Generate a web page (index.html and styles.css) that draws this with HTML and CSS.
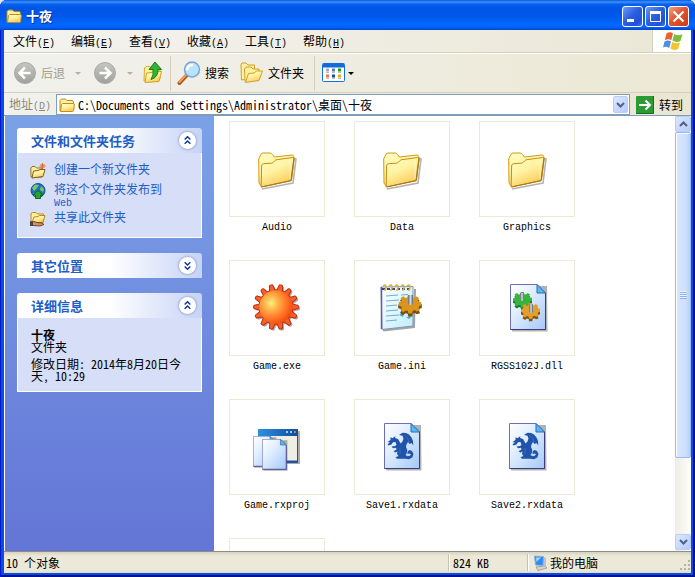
FILE: index.html
```html
<!DOCTYPE html>
<html lang="zh-CN">
<head>
<meta charset="utf-8">
<meta name="viewport" content="width=device-width, initial-scale=1">
<title>十夜</title>
<link rel="stylesheet" href="styles.css">
</head>
<body>
<svg class="defs" width="0" height="0" aria-hidden="true">
  <defs>
    <linearGradient id="gFolder" x1="0" y1="0" x2=".5" y2="1"><stop offset="0" stop-color="#fffcc8"/><stop offset=".5" stop-color="#fff3a2"/><stop offset="1" stop-color="#fbcb5c"/></linearGradient>
    <linearGradient id="gPage" x1="0" y1="0" x2="1" y2="1"><stop offset="0" stop-color="#fff"/><stop offset=".35" stop-color="#e4f0ff"/><stop offset="1" stop-color="#a4c8fa"/></linearGradient>
    <radialGradient id="gSun" gradientUnits="userSpaceOnUse" cx="18" cy="19" r="23"><stop offset="0" stop-color="#fff07a"/><stop offset=".35" stop-color="#ffac45"/><stop offset=".75" stop-color="#ff6a20"/><stop offset="1" stop-color="#f2480f"/></radialGradient>
    <linearGradient id="gGray" x1="0" y1="0" x2="0" y2="1"><stop offset="0" stop-color="#c6c6c2"/><stop offset="1" stop-color="#9f9f9b"/></linearGradient>
    <linearGradient id="gPad" x1="0" y1="0" x2="1" y2="1"><stop offset="0" stop-color="#fff"/><stop offset="1" stop-color="#bdeef8"/></linearGradient>
    <linearGradient id="gBar" x1="0" y1="0" x2="1" y2="0"><stop offset="0" stop-color="#2f90e0"/><stop offset="1" stop-color="#0a4ea0"/></linearGradient>
    <linearGradient id="gPin" x1="0" y1="0" x2="1" y2="0"><stop offset="0" stop-color="#5c6670"/><stop offset=".5" stop-color="#d5dbe0"/><stop offset="1" stop-color="#59616a"/></linearGradient>
  </defs>
  <symbol id="folder-lg" viewBox="0 0 48 48">
    <g transform="translate(5 7)">
      <path d="M4 37 35 31 38 7 36 6" fill="none" stroke="#777" stroke-width="1.6" opacity=".55"/>
      <path d="M3 34 1 31 .7 7 2.6 3Q3.2 1 5 1H12Q13.700 1 14.600 2.500L16.400 5 34 3Q35.500 3 35.700 4.500L33 28Z" fill="url(#gFolder)" stroke="#cf9c17"/>
      <path d="M3.200 35 3.600 14Q3.600 12 5.500 11.700L13.500 11.200Q15 11 16.500 9L18 7.800 34.700 5.500Q36.400 5.300 36.200 7L33.700 27Q33.500 28.700 32 29Z" fill="url(#gFolder)" stroke="#c39012"/>
      <path d="M3.500 35 33 28.600 36 6" fill="none" stroke="#a77710" stroke-width="1.200"/>
      <path d="M32 7.500V27" stroke="#fffbe0" opacity=".7"/>
    </g>
  </symbol>
  <symbol id="folder-sm" viewBox="0 0 16 16">
    <path d="M1 14V3.500L2.500 2H6.500L8 3.500H13.500L14.500 5V7" fill="#fff0a0" stroke="#b98a20"/>
    <path d="M1.500 14.500 2.500 7.500 3.500 6.500H14.500Q15.500 6.500 15.300 8L14.700 13.500Q14.500 14.500 13.500 14.500Z" fill="url(#gFolder)" stroke="#c08d1e"/>
  </symbol>
  <symbol id="page" viewBox="0 0 38 48" preserveAspectRatio="none">
    <path d="M2 2H37L37.500 47.500H2Z" fill="#555" opacity=".45"/>
    <path d="M.5.5H27L35.500 9V45.500H.5Z" fill="url(#gPage)" stroke="#6b6fb8"/>
    <path d="M.5 45.500H35.500V9" fill="none" stroke="#3e3c7c"/>
    <path d="M27 .5V9H35.500Z" fill="#59b8f2" stroke="#2b6cb4"/>
  </symbol>
  <symbol id="cog" viewBox="0 0 26 22">
    <path d="M10 3 10.500 0 15 0 15.500 3 18 3.500 20 1.500 23.500 3.500 22 6 23 7.500 26 8 26 12 23.500 13 23 15 24 18 20.500 19 18.500 17.500 16 18.500 15.500 21.500 11 21.500 10.500 18.500 8 18 5.500 20 2 17.500 3.500 15 2.500 13 0 12.500 0 8.500 2.700 7.500 3.500 6 2 3.500 5.500 1.500 7.500 3.500Z"/>
  </symbol>
  <symbol id="dragon" viewBox="0 0 48 48">
    <use href="#page" x="6" y="0" width="38" height="48"/>
    <path d="M21 12 24.500 9.700 28 10 31 11.500 33.500 14.500 35 18 35.300 22.500 33.500 20 31.500 21 30 19 28.500 21.500 28 24 29.300 27 28.800 30 27.500 32 29.500 33.300 32 32.800 33 31 31 30.500 29.500 31.200 29.600 28.500 31.500 27 34 28 35.500 31 34.300 34.500 31 36.200 27.500 35.800 19 35.700 17.500 34.300 20.500 33 19 31 19.500 28.500 17.500 29.500 15.500 28.300 18.500 26.500 18 24.800 15 25.300 13.500 23.500 17 23 18.500 22 17.500 19 15 19.300 13.500 21.500 10.500 22.500 9.500 21.300 12 19.500 9.500 19 12.500 17 12.500 14.300 14.500 15.200 17.500 13 17 15 20 16 21.500 18.500 22.500 20.500 24.500 18.500 25.500 15.500 24.500 12.800Z" fill="#2153aa"/>
    <path d="M26 12 29.500 15 31 19M22 25V31" stroke="#5684d0" stroke-width=".5" fill="none"/>
  </symbol>
</svg>

<main class="window">
  <header class="titlebar">
    <svg class="ic16" aria-hidden="true"><use href="#folder-sm"/></svg>
    <h1>十夜</h1>
    <button class="cap" aria-label="最小化"><svg viewBox="0 0 19 19"><path d="M4 13.500H11" stroke="#fff" stroke-width="3"/></svg></button>
    <button class="cap" aria-label="最大化"><svg viewBox="0 0 19 19"><path d="M4.500 4V14.500H14.500V4" stroke="#fff" fill="none"/><path d="M4 5.500H15" stroke="#fff" stroke-width="3"/></svg></button>
    <button class="cap close" aria-label="关闭"><svg viewBox="0 0 19 19"><path d="M4.500 4.500 14.500 14.500M14.500 4.500 4.500 14.500" stroke="#fff" stroke-width="2.200"/></svg></button>
  </header>

  <div class="menurow">
    <nav class="menu">
      <button>文件<span class="key">(<u>F</u>)</span></button>
      <button>编辑<span class="key">(<u>E</u>)</span></button>
      <button>查看<span class="key">(<u>V</u>)</span></button>
      <button>收藏<span class="key">(<u>A</u>)</span></button>
      <button>工具<span class="key">(<u>T</u>)</span></button>
      <button>帮助<span class="key">(<u>H</u>)</span></button>
    </nav>
    <div class="brand">
      <svg width="20" height="20" viewBox="0 0 20 20" aria-hidden="true">
        <path d="M3.500 2.500Q7 0 10 2.500L8.300 9Q5 7.500 1.800 9.200Z" fill="#ec6130"/>
        <path d="M11.200 3Q15 5.500 19.500 3L17.500 10Q13.500 12 9.500 9.600Z" fill="#7cbd3c"/>
        <path d="M1.500 10.500Q5 8.500 8 10.400L6.200 17Q3 15 0 16.500Z" fill="#4a8fe0"/>
        <path d="M9.200 11Q13 13.300 17 11.500L15 18Q11.500 20 7.300 17.500Z" fill="#f8c42c"/>
      </svg>
    </div>
  </div>

  <div class="toolbar">
    <button class="tool back" disabled>
      <svg width="24" height="24" viewBox="0 0 24 24" aria-hidden="true"><circle cx="12" cy="12" r="10.500" fill="url(#gGray)" stroke="#a9a9a5"/><path d="M17.500 12H8M12 6.500 6.500 12 12 17.500" fill="none" stroke="#fff" stroke-width="2.500"/></svg>
      <span>后退</span><i class="tri"></i>
    </button>
    <button class="tool forward" disabled aria-label="前进">
      <svg width="24" height="24" viewBox="0 0 24 24" aria-hidden="true"><circle cx="12" cy="12" r="10.500" fill="url(#gGray)" stroke="#a9a9a5"/><path d="M6.500 12H16M12 6.500 17.500 12 12 17.500" fill="none" stroke="#fff" stroke-width="2.500"/></svg>
      <i class="tri"></i>
    </button>
    <button class="tool up" aria-label="向上">
      <svg width="20" height="24" viewBox="0 0 20 24" aria-hidden="true">
        <path d="M1 20 1.500 7 3 5.500H7L8.500 7.500 17 7V18Z" fill="#fff0a0" stroke="#d8ab32"/>
        <path d="M2 21.500 3.500 12 9 11.500 11 10 18.500 10.500 16 20.500Z" fill="url(#gFolder)" stroke="#d0a02c"/>
        <path d="M12 1 18.500 8.500H15Q15.500 16 8 18.500 11 14 10 8.500H6Z" fill="#35b335" stroke="#168016"/>
      </svg>
    </button>
    <span class="sep"></span>
    <button class="tool search">
      <svg width="24" height="24" viewBox="0 0 24 24" aria-hidden="true"><path d="M2.500 22 10 14" stroke="#a75724" stroke-width="4" stroke-linecap="round"/><path d="M2.500 21 9.500 13.500" stroke="#f09a52" stroke-width="2" stroke-linecap="round"/><circle cx="15" cy="8.500" r="7.500" fill="#b9e2fb" stroke="#7aa4d4" stroke-width="1.500"/><path d="M10 9Q11 3.500 16 4" stroke="#fff" stroke-width="2.500" fill="none"/></svg>
      <span>搜索</span>
    </button>
    <button class="tool folders">
      <svg width="24" height="22" viewBox="0 0 24 22" aria-hidden="true">
        <path d="M1.500 18 1 3 2 1H6L8 3H14.500V16Z" fill="#fff0a0" stroke="#d0a02c"/>
        <path d="M5 19.500 4.500 7 6 5H11L13 7H19V18Z" fill="#fff0a0" stroke="#d0a02c"/>
        <path d="M5.500 20.500 8.500 11.500 14 11 16.500 9 22.500 9 19 18.500Z" fill="url(#gFolder)" stroke="#d0a02c"/>
      </svg>
      <span>文件夹</span>
    </button>
    <span class="sep"></span>
    <button class="tool views" aria-label="查看方式">
      <svg width="24" height="20" viewBox="0 0 24 20" aria-hidden="true"><rect x=".5" y=".5" width="22" height="18" rx="1" fill="#fff" stroke="#1670dc"/><path d="M1 2.500H22" stroke="#1269d8" stroke-width="4"/>
        <g><path d="M4 5.500h3v3h-3z" fill="#a8a4c8"/><path d="M10 5.500h3v3h-3z" fill="#527cc8"/><path d="M16 5.500h3v3h-3z" fill="#159a22"/><path d="M4 11.500h3v3h-3z" fill="#f07440"/><path d="M10 11.500h3v3h-3z" fill="#1746a0"/><path d="M16 11.500h3v3h-3z" fill="#e8a51e"/><path d="M4 9.500H7M10 9.500H13M16 9.500H19M4 15.500H7M10 15.500H13M16 15.500H19" stroke="#bbb"/></g></svg>
      <i class="tri dark"></i>
    </button>
  </div>

  <form class="addressbar">
    <label for="address">地址<span class="key">(<u>D</u>)</span></label>
    <div class="combo">
      <svg class="ic16" aria-hidden="true"><use href="#folder-sm"/></svg>
      <input id="address" type="text" value="C:\Documents and Settings\Administrator\桌面\十夜">
      <button type="button" class="xpbtn" aria-label="展开地址列表"><svg width="9" height="6" viewBox="0 0 9 6"><path d="M1 1 4.500 4.500 8 1" fill="none" stroke="#4d6185" stroke-width="2"/></svg></button>
    </div>
    <button type="button" class="go"><svg width="18" height="18" viewBox="0 0 18 18" aria-hidden="true"><rect width="18" height="18" rx="1" fill="#2c9a34"/><path d="M0 17.500H17.500V0" fill="none" stroke="#14701c"/><path d="M3 9H14M9.500 4.500 14 9 9.500 13.500" fill="none" stroke="#fff" stroke-width="2"/></svg>转到</button>
  </form>

  <div class="content">
    <aside class="tasks">
      <section class="panel">
        <div class="head"><h2>文件和文件夹任务</h2><button class="round" aria-label="折叠"><svg viewBox="0 0 18 18"><path d="M6 8 9 5 12 8M6 12.500 9 9.500 12 12.500"/></svg></button></div>
        <ul class="links">
          <li><svg class="ic16" viewBox="0 0 16 16" aria-hidden="true"><path d="M1 14 .8 5 2 3.500H5L6.500 5H12V14Z" fill="#fff0a0" stroke="#8f7126"/><path d="M2 15 3.500 8 8 7.500 10 6.500H15L13 13.500Z" fill="url(#gFolder)" stroke="#7b5f20"/><path d="M12.500 0V6M9.500 3H15.500M10.500 1 14.500 5M14.500 1 10.500 5" stroke="#e66824"/></svg><a href="#">创建一个新文件夹</a></li>
          <li><svg class="ic16" viewBox="0 0 16 16" aria-hidden="true"><circle cx="8" cy="7.500" r="7" fill="#2670ba" stroke="#14539c"/><path d="M2 5 5 1.500 9 2 7 5 4 8ZM11 3 14 6 13 9 10 7ZM3 10 6 12 5 14Z" fill="#77c968"/><path d="M8 7.500 13 12H10.500V15.500H5.500V12H3Z" fill="#24a62c" stroke="#08691c"/></svg><a href="#">将这个文件夹发布到<br><span class="lat">Web</span></a></li>
          <li><svg class="ic16" viewBox="0 0 16 16" aria-hidden="true"><path d="M1 11V2.500L2.500 1.500H6L7.500 3H13.500V11Z" fill="#fff0a0" stroke="#b98a20"/><path d="M2 11.500 4 6 8 5.500 9.500 4.500H15L13 11.500Z" fill="url(#gFolder)" stroke="#b98a20"/><path d="M0 11 4 10.500 7 11.500 12 12 14 13.500 10 15 4 14.500 0 14.500Z" fill="#d88c56" stroke="#513425" stroke-width=".8"/><path d="M0 10.500H3V15H0Z" fill="#454545"/></svg><a href="#">共享此文件夹</a></li>
        </ul>
      </section>
      <section class="panel">
        <div class="head"><h2>其它位置</h2><button class="round" aria-label="展开"><svg viewBox="0 0 18 18"><path d="M6 5.500 9 8.500 12 5.500M6 10 9 13 12 10"/></svg></button></div>
      </section>
      <section class="panel">
        <div class="head"><h2>详细信息</h2><button class="round" aria-label="折叠"><svg viewBox="0 0 18 18"><path d="M6 8 9 5 12 8M6 12.500 9 9.500 12 12.500"/></svg></button></div>
        <div class="info"><b>十夜</b><p>文件夹</p><p class="date">修改日期: 2014年8月20日今天, 10:29</p></div>
      </section>
    </aside>

    <ul class="files">
      <li><div class="thumb"><svg><use href="#folder-lg"/></svg></div><span>Audio</span></li>
      <li><div class="thumb"><svg><use href="#folder-lg"/></svg></div><span>Data</span></li>
      <li><div class="thumb"><svg><use href="#folder-lg"/></svg></div><span>Graphics</span></li>
      <li><div class="thumb"><svg viewBox="0 0 48 48">
        <defs><path id="tooth" d="M-3.800-15.500Q-2.300-17-2-20.700-1.900-22.500-.8-22.500H.8Q1.900-22.500 2-20.700 2.300-17 3.800-15.500Z"/>
        <g id="ring"><use href="#tooth" transform="rotate(12.860)"/><use href="#tooth" transform="rotate(38.570)"/><use href="#tooth" transform="rotate(64.290)"/><use href="#tooth" transform="rotate(90)"/><use href="#tooth" transform="rotate(115.710)"/><use href="#tooth" transform="rotate(141.430)"/><use href="#tooth" transform="rotate(167.140)"/><use href="#tooth" transform="rotate(192.860)"/><use href="#tooth" transform="rotate(218.570)"/><use href="#tooth" transform="rotate(244.290)"/><use href="#tooth" transform="rotate(270)"/><use href="#tooth" transform="rotate(295.710)"/><use href="#tooth" transform="rotate(321.430)"/><use href="#tooth" transform="rotate(347.140)"/></g></defs>
        <g transform="translate(24.500 24.500)" fill="#555" opacity=".5"><use href="#ring"/><circle r="17"/></g>
        <g transform="translate(23 23)" fill="#f4602a" stroke="#bd2a0b"><circle r="17"/><use href="#ring"/></g>
        <circle cx="23" cy="23" r="16.700" fill="url(#gSun)"/>
      </svg></div><span>Game.exe</span></li>
      <li><div class="thumb"><svg viewBox="0 0 48 48">
        <path d="M5 46.500 36 43 37 5" fill="none" stroke="#666" stroke-width="2" opacity=".6"/>
        <path d="M3 3 35 2.500V42L4 45.500Z" fill="url(#gPad)" stroke="#7c91b8"/><path d="M3.500 3V45" stroke="#6557ae" stroke-width="1.500"/>
        <path d="M8 12 20 11M8 17 21 16M8 22 19 21M8 27 20 26M8 32 21 31M8 37 19 36M23 11 30 10.500" stroke="#71abd6"/>
        <path d="M4 5H33" stroke="#3e3f91" stroke-width="2" stroke-dasharray="3 2"/>
        <g fill="none" stroke="#d8b520" stroke-width="1.500"><path d="M5 2Q8-.5 8 3T6 6M11 2Q14-.5 14 3T12 6M17 2Q20-.5 20 3T18 6M23 2Q26-.5 26 3T24 6M29 2Q32-.5 32 3T30 6"/></g>
        <path d="M21 31 26 28 25 33ZM28 33 34 32 31 35Z" fill="#42a5ef"/>
        <use href="#cog" x="19" y="13" width="26" height="20" fill="#79500d"/><use href="#cog" x="19" y="11" width="26" height="19" fill="#d9951d"/>
        <path d="M30 11H35V20Q32.500 22 30 20Z" fill="url(#gPin)"/>
      </svg></div><span>Game.ini</span></li>
      <li><div class="thumb"><svg viewBox="0 0 48 48">
        <use href="#page" x="7" y="0" width="38" height="48"/>
        <use href="#cog" x="10" y="10" width="19" height="16" fill="#187528"/><use href="#cog" x="10" y="8" width="19" height="16" fill="#37b43a"/>
        <path d="M17 9H21V16Q19 18 17 16Z" fill="url(#gPin)"/>
        <use href="#cog" x="18" y="21" width="19" height="17" fill="#895008"/><use href="#cog" x="18" y="19" width="19" height="16" fill="#e0a02b"/>
        <path d="M26 20H30V28Q28 30 26 28Z" fill="url(#gPin)"/>
      </svg></div><span>RGSS102J.dll</span></li>
      <li><div class="thumb"><svg viewBox="0 0 48 48">
        <path d="M7 8H47V41H7Z" fill="#555" opacity=".5"/><rect x="5.500" y="6.500" width="39" height="33" fill="#efeee2" stroke="#1a57a5"/><rect x="5" y="6" width="40" height="7" fill="url(#gBar)"/><path d="M5 38.500H45" stroke="#2451a0" stroke-width="2"/><path d="M33 9H35M37 9H39" stroke="#98c8f5" stroke-width="2"/><path d="M41 9H43" stroke="#f0623a" stroke-width="2"/>
        <use href="#page" x="0" y="13" width="24" height="32"/><use href="#page" x="9" y="16" width="26" height="32"/>
      </svg></div><span>Game.rxproj</span></li>
      <li><div class="thumb"><svg><use href="#dragon"/></svg></div><span>Save1.rxdata</span></li>
      <li><div class="thumb"><svg><use href="#dragon"/></svg></div><span>Save2.rxdata</span></li>
      <li><div class="thumb"></div></li>
    </ul>

    <div class="scroll">
      <button class="xpbtn" aria-label="向上滚动"><svg width="9" height="6" viewBox="0 0 9 6"><path d="M1 5 4.500 1.500 8 5" fill="none" stroke="#4d6185" stroke-width="2"/></svg></button>
      <div class="track"><div class="grabber"><i></i></div></div>
      <button class="xpbtn" aria-label="向下滚动"><svg width="9" height="6" viewBox="0 0 9 6"><path d="M1 1 4.500 4.500 8 1" fill="none" stroke="#4d6185" stroke-width="2"/></svg></button>
    </div>
  </div>

  <footer class="status">
    <span class="count">10 个对象</span>
    <span class="size">824 KB</span>
    <span class="place"><svg class="ic16" viewBox="0 0 16 16" aria-hidden="true"><path d="M4 12 13 11 15 13 6 15.500Z" fill="#d8d5c8" stroke="#8b8a85" stroke-width=".7"/><path d="M11 1.500 14 3V11L11 12Z" fill="#b9c2d0"/><path d="M2.500 1 11.500 1.500 11 10.500 3.500 10Z" fill="#2d8cf0" stroke="#8ab0dd"/><path d="M4 2.500H9L4.500 7Z" fill="#a2d4ff"/></svg>我的电脑</span>
    <svg class="grip" width="12" height="12" viewBox="0 0 12 12" aria-hidden="true"><path d="M9 1h2v2h-2zM5 5h2v2h-2zM9 5h2v2h-2zM1 9h2v2h-2zM5 9h2v2h-2zM9 9h2v2h-2z" fill="#b8b4a2"/></svg>
  </footer>
</main>
</body>
</html>
```
FILE: styles.css
```css
* { box-sizing: border-box; }

body {
  margin: 0;
  background: #dfe6ea;
  color: #000;
  font: 12px/12px "Noto Sans CJK SC", sans-serif;
  font-feature-settings: "hwid";
}

button {
  padding: 0;
  border: 0;
  background: none;
  color: inherit;
  font: inherit;
  font-feature-settings: inherit;
}

h1, h2, p, ul { margin: 0; padding: 0; }
ul { list-style: none; }
svg { display: block; flex: none; }
.defs { position: absolute; }
.ic16 { width: 16px; height: 16px; }

.window {
  display: flex;
  flex-direction: column;
  height: 100vh;
  padding: 0 4px 4px;
  overflow: hidden;
  border-radius: 7px 7px 0 0;
  background: #0a4be0;
  box-shadow: inset 1px 0 #0019cf, inset -2px 0 #00138c, inset 0 -2px #00138c;
}

/* Title bar */
.titlebar {
  display: flex;
  align-items: center;
  gap: 2px;
  flex: none;
  height: 30px;
  margin: 0 -4px;
  padding: 2px 6px 0;
  background: linear-gradient(#0a57d8 0, #3c94ff 2px, #0a62ee 4px, #0055e5 8px, #0057e8 16px, #0266ff 24px, #0264fb 27px, #0046cf 30px);
}
.titlebar h1 {
  flex: 1;
  padding-left: 2px;
  color: #fff;
  font-size: 13px;
  line-height: 16px;
  font-weight: bold;
  text-shadow: 1px 1px #0a2f8c;
}
.cap {
  width: 21px;
  height: 21px;
  border: 1px solid #fff;
  border-radius: 3px;
  background: linear-gradient(135deg, #6f9bf5, #2c5fe0 45%, #2050d8 80%, #3d78f2);
}
.cap svg { width: 19px; height: 19px; }
.close { background: linear-gradient(135deg, #f0a088, #e2552f 45%, #cc3a12); }

/* Menu */
.menurow {
  display: flex;
  flex: none;
  height: 23px;
  border-bottom: 1px solid #d5ceb9;
  background: linear-gradient(90deg, #f3f3f0, #ebe7d6);
}
.menu {
  display: flex;
  flex: 1;
  gap: 16px;
  padding-left: 9px;
}
.menu button { width: 42px; white-space: nowrap; }
.key, .lat {
  font-family: "Liberation Mono", monospace;
  font-size: 10px;
  line-height: 0;
}
.brand {
  display: flex;
  align-items: center;
  width: 39px;
  padding-left: 10px;
  border-left: 1px solid #d5ceb9;
  background: #fff;
}

/* Toolbar */
.toolbar {
  display: flex;
  align-items: center;
  flex: none;
  height: 40px;
  padding-left: 9px;
  border-top: 1px solid #fff;
  border-bottom: 1px solid #d5ceb9;
  background: linear-gradient(90deg, #f1f1ed, #ece8d4);
}
.tool {
  display: flex;
  align-items: center;
  gap: 4px;
}
.tool:disabled { color: #a19f92; }
.tri {
  margin-left: 6px;
  border: 3px solid transparent;
  border-top-color: #b5b2a4;
  border-bottom: 0;
}
.tri.dark { margin-left: 0; border-top-color: #000; }
.forward { margin-left: 12px; }
.up { margin: 0 7px 0 10px; }
.sep {
  width: 1px;
  height: 35px;
  background: #d5ceb9;
}
.search { margin: 0 11px 0 6px; }
.folders { margin-right: 10px; }
.views { margin-left: 7px; gap: 2px; }

/* Address bar */
.addressbar {
  display: flex;
  align-items: stretch;
  flex: none;
  height: 23px;
  padding: 1px 8px 0 5px;
  background: linear-gradient(90deg, #f1f1ed, #ebe6d2);
  border-bottom: 1px solid #7f9db9;
}
.addressbar label {
  width: 47px;
  color: #8b897c;
  line-height: 20px;
}
.combo {
  display: flex;
  align-items: center;
  flex: 1;
  min-width: 0;
  padding: 0 1px 0 2px;
  border: 1px solid #7f9db9;
  background: #fff;
}
.combo input {
  flex: 1;
  min-width: 0;
  height: 18px;
  padding: 0 3px;
  border: 0;
  outline: 0;
  background: none;
  color: #000;
  font: inherit;
  font-feature-settings: inherit;
}
.xpbtn {
  display: flex;
  align-items: center;
  justify-content: center;
  flex: none;
  width: 15px;
  height: 17px;
  border: 1px solid #bccdf5;
  border-radius: 2px;
  background: linear-gradient(135deg, #dbe6ff, #b7cbfa);
}
.go {
  display: flex;
  align-items: center;
  gap: 5px;
  margin-left: 6px;
}

/* Content */
.content {
  display: flex;
  flex: 1;
  min-height: 0;
  padding-left: 1px;
  background: #fff;
}
.tasks {
  display: flex;
  flex: none;
  flex-direction: column;
  gap: 15px;
  width: 209px;
  padding: 12px;
  background: linear-gradient(#7ba2e7, #6375d6);
}
.head {
  display: flex;
  align-items: center;
  justify-content: space-between;
  height: 25px;
  padding: 0 6px 0 14px;
  border-radius: 3px 3px 0 0;
  background: linear-gradient(90deg, #fff 50%, #c6d3f7);
}
.head h2 {
  color: #215dc6;
  font-size: 13px;
  line-height: 14px;
  font-weight: bold;
}
.round {
  width: 17px;
  height: 17px;
  border-radius: 50%;
  background: #fff;
  box-shadow: 0 0 2px 1px #a4aed0;
}
.round svg { width: 17px; height: 17px; }
.round path { fill: none; stroke: #0b3499; stroke-width: 1.5; }
.links, .info {
  border: 1px solid #fff;
  border-top: 0;
  background: #d6dff7;
}
.links {
  display: grid;
  gap: 4px;
  padding: 10px 12px;
}
.links li {
  display: flex;
  gap: 8px;
}
.links a {
  color: #215dc6;
  line-height: 12px;
  text-decoration: none;
}
.info {
  padding: 10px 12px 9px 13px;
}
.info b { display: block; line-height: 13px; }
.info .date { padding-top: 5px; }

/* File thumbnails */
.files {
  display: grid;
  flex: 1;
  grid-template-columns: repeat(auto-fill, 96px);
  gap: 26px 29px;
  align-content: start;
  min-width: 0;
  padding: 5px 0 0 15px;
  overflow: hidden;
}
.files li {
  display: flex;
  flex-direction: column;
  align-items: center;
  gap: 5px;
  font: 10px/12px "Liberation Mono", monospace;
}
.thumb {
  display: flex;
  align-items: center;
  justify-content: center;
  width: 96px;
  height: 96px;
  border: 1px solid #ece9d8;
}
.thumb svg { width: 48px; height: 48px; }

/* Scroll bar */
.scroll {
  display: flex;
  flex: none;
  flex-direction: column;
  width: 16px;
  padding-bottom: 1px;
  background: linear-gradient(90deg, #eeede5, #fefefb);
}
.scroll .xpbtn { width: 16px; height: 16px; }
.track { flex: 1; min-height: 0; }
.grabber {
  display: flex;
  align-items: center;
  justify-content: center;
  height: 81%;
  border: 1px solid #98b8ee;
  border-radius: 2px;
  background: linear-gradient(90deg, #d9e8ff, #cddfff 70%, #b9d0fb);
  box-shadow: inset 1px 1px #fff;
}
.grabber i {
  width: 7px;
  height: 8px;
  background: repeating-linear-gradient(#eef4fe 0 1px, #8cb0f0 1px 2px);
}

/* Status bar */
.status {
  display: flex;
  align-items: stretch;
  flex: none;
  height: 22px;
  padding: 2px 0;
  border-top: 1px solid #8f8d82;
  background: linear-gradient(#d8d3c0, #ece9d8 4px, #ece9d8 18px, #e0dcc8);
}
.status span {
  display: flex;
  align-items: center;
  padding-left: 4px;
}
.status .count {
  flex: 1;
  padding-left: 2px;
}
.size, .place {
  border-left: 1px solid #c5c2b0;
  box-shadow: inset 1px 0 #fff;
}
.size { width: 79px; }
.place { flex: none; width: 152px; gap: 2px; }
.grip { align-self: flex-end; }
```
